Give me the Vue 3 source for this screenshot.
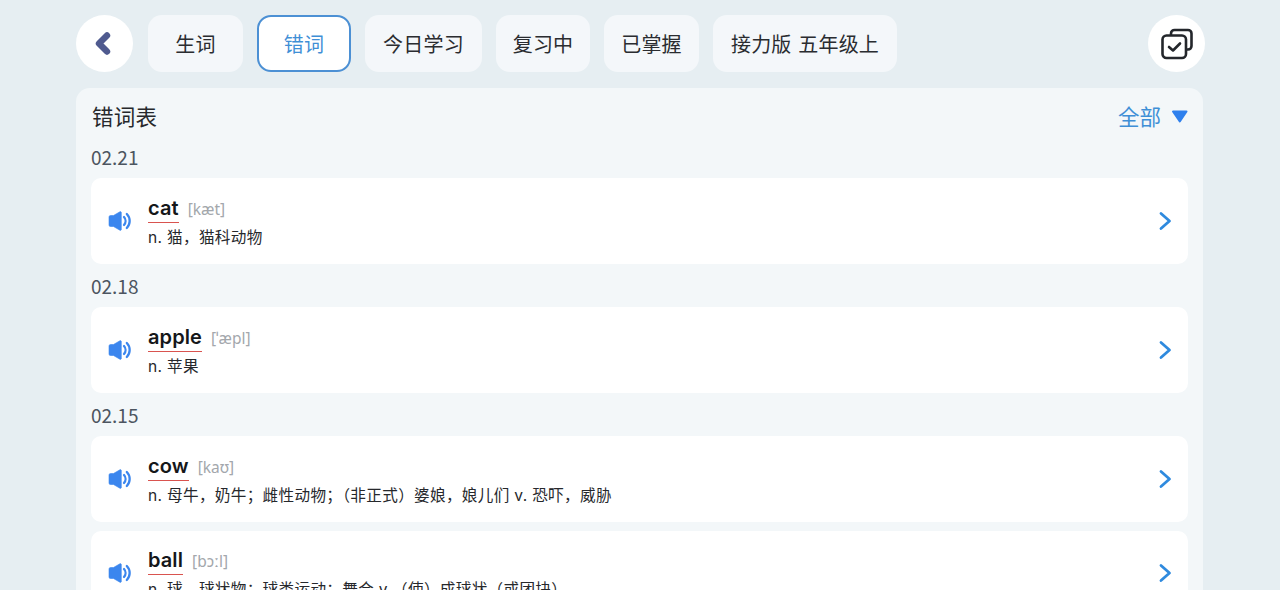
<template>
  <div class="page">
    <div class="top-bar">
      <button class="round-btn">
        <svg width="24" height="26" viewBox="0 0 24 26"><path d="M14 4.5 L6 12.5 L14 20.5" fill="none" stroke="#4f5a8f" stroke-width="6.4" stroke-linecap="round" stroke-linejoin="round" /></svg>
      </button>
      <div class="tabs">
        <div v-for="tab in tabs" :key="tab.name" class="tab" :class="{ active: tab.active }" :style="{ width: tab.width + 'px' }">{{ tab.name }}</div>
      </div>
      <button class="round-btn check-btn">
        <svg width="34" height="34" viewBox="0 0 34 34" fill="none" stroke="#23262b" stroke-width="2.6" stroke-linejoin="round" stroke-linecap="round">
          <path d="M11 7.5 V6.5 a3.5 3.5 0 0 1 3.5 -3.5 H28 a3.5 3.5 0 0 1 3.5 3.5 V19 a3.5 3.5 0 0 1 -3.5 3.5 H26.5" />
          <rect x="2.5" y="8.5" width="23.5" height="22.5" rx="4" />
          <path d="M9 20 L13 23.5 L20 16.5" />
        </svg>
      </button>
    </div>

    <div class="panel">
      <div class="panel-head">
        <span class="panel-title">错词表</span>
        <span class="filter">全部<svg class="arrow" width="17" height="13" viewBox="0 0 17 13"><path d="M2 1.5 H15.5 L8.8 11.5 Z" fill="#2f80ed" stroke="#2f80ed" stroke-width="2" stroke-linejoin="round" /></svg></span>
      </div>
      <template v-for="group in groups" :key="group.word">
        <div v-if="group.date" class="date">{{ group.date }}</div>
        <div class="card" :class="{ tight: !group.date }">
          <svg class="sound" width="24" height="20" viewBox="0 0 24 20">
            <path d="M1 6 a1.5 1.5 0 0 1 1.5 -1.5 H5.5 L11.5 1 a1 1 0 0 1 1.8 .8 V18.2 a1 1 0 0 1 -1.8 .8 L5.5 15.5 H2.5 a1.5 1.5 0 0 1 -1.5 -1.5 Z" fill="#3b86ee" stroke="#3b86ee" stroke-width="0.6" />
            <path d="M16 6 a6 6 0 0 1 0 8" fill="none" stroke="#3b86ee" stroke-width="2.3" stroke-linecap="round" />
            <path d="M18.8 3 a10 10 0 0 1 0 14" fill="none" stroke="#3b86ee" stroke-width="2.3" stroke-linecap="round" />
          </svg>
          <div class="word-box">
            <div class="word-line">
              <span class="word">{{ group.word }}</span>
              <span class="phon">{{ group.phon }}</span>
            </div>
            <div class="mean">{{ group.mean }}</div>
          </div>
          <svg class="go" width="16" height="20" viewBox="0 0 16 20"><path d="M3 2.5 L11.5 10 L3 17.5" fill="none" stroke="#2f8ade" stroke-width="2.8" stroke-linecap="round" stroke-linejoin="round" /></svg>
        </div>
      </template>
    </div>
  </div>
</template>

<script setup>
const tabs = [
  { name: '生词', width: 95 },
  { name: '错词', width: 94, active: true },
  { name: '今日学习', width: 117 },
  { name: '复习中', width: 94 },
  { name: '已掌握', width: 95 },
  { name: '接力版 五年级上', width: 184 },
];

const groups = [
  { date: '02.21', word: 'cat', phon: '[kæt]', mean: 'n. 猫，猫科动物' },
  { date: '02.18', word: 'apple', phon: '[ˈæpl]', mean: 'n. 苹果' },
  { date: '02.15', word: 'cow', phon: '[kaʊ]', mean: 'n. 母牛，奶牛；雌性动物；（非正式）婆娘，娘儿们 v. 恐吓，威胁' },
  { date: '', word: 'ball', phon: '[bɔːl]', mean: 'n. 球，球状物；球类运动；舞会 v.（使）成球状（或团块）' },
];
</script>

<style>
html, body { margin: 0; height: 590px; overflow: hidden; background: #e6eef2; }
</style>

<style scoped>
.page { height: 590px; overflow: hidden; padding: 15px 75px 0 76px; box-sizing: border-box; font-family: "Noto Sans CJK SC", "Noto Sans", sans-serif; color: #26282c; }
.top-bar { display: flex; align-items: center; height: 57px; }
.round-btn { width: 57px; height: 57px; border: none; border-radius: 50%; background: #fff; display: flex; align-items: center; justify-content: center; padding: 0; flex-shrink: 0; }
.check-btn { margin-left: auto; }
.tabs { display: flex; gap: 14px; margin-left: 15px; }
.tab { height: 57px; box-sizing: border-box; background: #f4f7fa; border-radius: 14px; display: flex; align-items: center; justify-content: center; font-size: 20px; color: #2a2c30; white-space: pre; word-spacing: 2px; letter-spacing: 0.2px; }
.tab.active { background: #fff; border: 2px solid #4c90d4; color: #3f8fd6; }
.panel { margin-top: 16px; width: 1127px; box-sizing: border-box; background: #f3f7f9; border-radius: 14px 14px 0 0; padding: 0 15px; height: 520px; }
.panel-head { display: flex; justify-content: space-between; align-items: center; height: 56px; }
.panel-title { font-size: 21.5px; line-height: 54px; margin-left: 1px; letter-spacing: 0.2px; color: #26282c; }
.filter { display: flex; align-items: center; font-size: 21.5px; line-height: 54px; color: #3f8fd6; }
.arrow { margin-left: 10px; margin-bottom: 0; }
.date { height: 34px; line-height: 25px; font-family: "Noto Sans CJK SC", sans-serif; font-size: 19px; color: #4c5560; }
.card { display: flex; align-items: center; height: 86px; background: #fff; border-radius: 10px; padding: 0 14px 0 17px; margin-bottom: 9px; }
.card.tight { height: 84px; }
.sound { flex-shrink: 0; margin-right: 16px; }
.word-box { flex: 1; min-width: 0; }
.word-line { display: flex; align-items: flex-start; height: 31px; }
.word { font-family: Inter, "Noto Sans", sans-serif; font-size: 20px; font-weight: 600; letter-spacing: 0.1px; line-height: 29px; border-bottom: 1.5px solid #d9534f; color: #15171a; padding-top: 1px; box-sizing: border-box; height: 30px; }
.phon { font-family: "Noto Sans", sans-serif; font-size: 15.5px; color: #a3a7ac; margin-left: 9px; line-height: 33px; }
.mean { font-family: Inter, "Noto Sans CJK SC", sans-serif; font-size: 15.6px; letter-spacing: 0.33px; line-height: 24px; margin-top: 2px; color: #26282c; white-space: nowrap; }
.go { flex-shrink: 0; }
</style>
